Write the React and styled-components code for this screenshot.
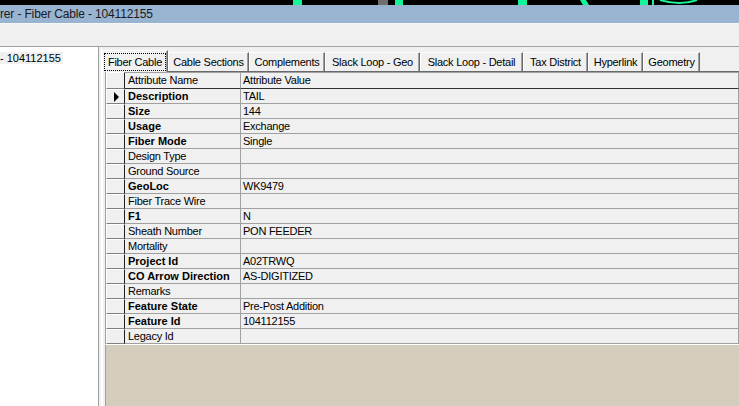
import React from "react";
import styled, { createGlobalStyle } from "styled-components";

const GlobalStyle = createGlobalStyle`
  html, body {
    margin: 0;
    padding: 0;
    background: #f0f0f0;
    overflow: hidden;
  }
`;

const Window = styled.div`
  width: 739px;
  height: 406px;
  overflow: hidden;
  display: flex;
  flex-direction: column;
  background: #f0f0f0;
  font-family: "Liberation Sans", Arial, sans-serif;
  font-size: 11px;
  color: #000;
`;

const TopStrip = styled.svg`
  display: block;
  flex: none;
`;

const TitleBar = styled.div`
  height: 18px;
  flex: none;
  background: #99b4d1;
  display: flex;
  align-items: center;
  font-size: 12px;
  letter-spacing: -0.15px;
  color: #1a1a1a;
  white-space: nowrap;
`;

const Toolbar = styled.div`
  flex: none;
  height: 24px;
  box-sizing: border-box;
  background: #f0f0f0;
  border-top: 1px solid #f7f7f7;
  border-bottom: 1px solid #a0a0a0;
`;

const Body = styled.div`
  flex: 1;
  display: flex;
  min-height: 0;
`;

const TreePane = styled.div`
  width: 98px;
  flex: none;
  background: #fff;
  padding-top: 5px;
  box-sizing: border-box;
`;

const TreeNode = styled.span`
  display: inline-block;
  background: #f0f0f0;
  line-height: 12px;
  padding: 0 2px 0 0;
  white-space: nowrap;
`;

const Splitter = styled.div`
  width: 4px;
  flex: none;
  box-sizing: border-box;
  border-left: 1px solid #a0a0a0;
  border-right: 1px solid #fff;
  background: #f0f0f0;
`;

const TabControl = styled.div`
  flex: 1;
  display: flex;
  flex-direction: column;
  padding-top: 3px;
  min-width: 0;
`;

const TabStrip = styled.div`
  display: flex;
  align-items: flex-end;
  height: 22px;
  box-sizing: border-box;
  border-bottom: 1px solid #696969;
`;

const Tab = styled.div`
  width: ${(p) => p.$w}px;
  height: ${(p) => (p.$active ? 22 : 19)}px;
  margin-bottom: ${(p) => (p.$active ? -1 : 0)}px;
  flex: none;
  box-sizing: border-box;
  display: flex;
  align-items: center;
  justify-content: center;
  border-top: 1px solid #fff;
  border-left: 1px solid #fff;
  border-right: 1px solid #696969;
  box-shadow: inset -1px 0 0 #a0a0a0;
  background: #f0f0f0;
  letter-spacing: -0.25px;
  white-space: nowrap;
  position: relative;
  z-index: ${(p) => (p.$active ? 1 : 0)};
`;

const FocusLabel = styled.span`
  border: 1px dotted #000;
  padding: 0 3px;
  line-height: 16px;
`;

const TabPage = styled.div`
  flex: 1;
  display: flex;
  flex-direction: column;
  padding-left: 2px;
  border-left: 1px solid #fff;
  min-height: 0;
`;

const Grid = styled.div`
  flex: none;
  display: flex;
  flex-direction: column;
  border-left: 1px solid #a0a0a0;
`;

const Row = styled.div`
  display: grid;
  grid-template-columns: 19px 116px 1fr;
  height: ${(p) => (p.$head ? 17 : 15)}px;
`;

const RowHead = styled.div`
  box-sizing: border-box;
  background: #f0f0f0;
  border-top: 1px solid #fff;
  border-left: 1px solid #fff;
  border-bottom: 1px solid #808080;
  border-right: 1px solid #202020;
  display: flex;
  align-items: center;
  justify-content: center;
`;

const Cell = styled.div`
  box-sizing: border-box;
  background: #f0f0f0;
  border-bottom: 1px solid ${(p) => (p.$head ? "#303030" : "#a0a0a0")};
  border-right: 1px solid #a0a0a0;
  border-top: ${(p) => (p.$head ? "1px solid #a0a0a0" : "none")};
  padding-left: ${(p) => (p.$value ? 2 : 3)}px;
  font-weight: ${(p) => (p.$bold ? 700 : 400)};
  letter-spacing: ${(p) => (p.$bold ? 0 : -0.25)}px;
  line-height: 14px;
  white-space: nowrap;
  overflow: hidden;
`;

const Arrow = styled.span`
  width: 0;
  height: 0;
  border-top: 5px solid transparent;
  border-bottom: 5px solid transparent;
  border-left: 5px solid #000;
  margin-left: 1px;
`;

const Empty = styled.div`
  flex: 1;
  background: #d4cdbd;
  border-left: 1px solid #a0a0a0;
  border-top: 1px solid #fff;
`;

const tabs = [
  { label: "Fiber Cable", w: 66, active: true },
  { label: "Cable Sections", w: 81 },
  { label: "Complements", w: 76 },
  { label: "Slack Loop - Geo", w: 95 },
  { label: "Slack Loop - Detail", w: 103 },
  { label: "Tax District", w: 65 },
  { label: "Hyperlink", w: 55 },
  { label: "Geometry", w: 57 },
];

const attributes = [
  ["Description", "TAIL", true],
  ["Size", "144", true],
  ["Usage", "Exchange", true],
  ["Fiber Mode", "Single", true],
  ["Design Type", "", false],
  ["Ground Source", "", false],
  ["GeoLoc", "WK9479", true],
  ["Fiber Trace Wire", "", false],
  ["F1", "N", true],
  ["Sheath Number", "PON FEEDER", false],
  ["Mortality", "", false],
  ["Project Id", "A02TRWQ", true],
  ["CO Arrow Direction", "AS-DIGITIZED", true],
  ["Remarks", "", false],
  ["Feature State", "Pre-Post Addition", true],
  ["Feature Id", "104112155", true],
  ["Legacy Id", "", false],
];

function MapStrip() {
  return (
    <TopStrip width="739" height="5" viewBox="0 0 739 5">
      <rect width="739" height="5" fill="#000" />
      <rect x="293" y="0" width="9" height="5" fill="#14f59a" />
      <rect x="378" y="0" width="10" height="5" fill="#6e6e6e" />
      <rect x="395" y="0" width="8" height="5" fill="#14f59a" />
      <rect x="518" y="0" width="9" height="5" fill="#14f59a" />
      <path d="M580 0 L586 0 L589 5 L583 5 Z" fill="#14f59a" />
      <rect x="640" y="0" width="8" height="5" fill="#14f59a" />
      <rect x="652" y="0" width="2" height="5" fill="#14f59a" />
      <path d="M660 0 Q680 6 697 0" stroke="#14f59a" strokeWidth="2" fill="none" />
    </TopStrip>
  );
}

export default function App() {
  return (
    <Window>
      <GlobalStyle />
      <MapStrip />
      <TitleBar>rer - Fiber Cable - 104112155</TitleBar>
      <Toolbar />
      <Body>
        <TreePane>
          <TreeNode>- 104112155</TreeNode>
        </TreePane>
        <Splitter />
        <TabControl>
          <TabStrip>
            {tabs.map((t) => (
              <Tab key={t.label} $w={t.w} $active={t.active}>
                {t.active ? <FocusLabel>{t.label}</FocusLabel> : t.label}
              </Tab>
            ))}
          </TabStrip>
          <TabPage>
            <Grid>
              <Row $head>
                <RowHead />
                <Cell $head>Attribute Name</Cell>
                <Cell $head $value>
                  Attribute Value
                </Cell>
              </Row>
              {attributes.map(([name, value, bold], i) => (
                <Row key={name}>
                  <RowHead>{i === 0 && <Arrow />}</RowHead>
                  <Cell $bold={bold}>{name}</Cell>
                  <Cell $value>{value}</Cell>
                </Row>
              ))}
            </Grid>
            <Empty />
          </TabPage>
        </TabControl>
      </Body>
    </Window>
  );
}
